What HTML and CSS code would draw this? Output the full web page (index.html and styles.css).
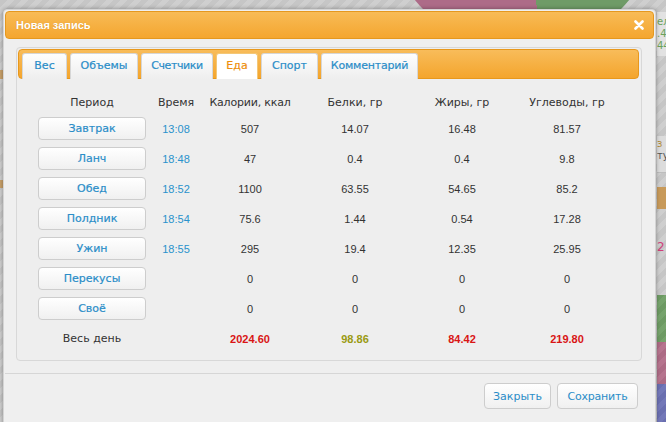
FILE: index.html
```html
<!DOCTYPE html>
<html lang="ru">
<head>
<meta charset="utf-8">
<title>Новая запись</title>
<link rel="stylesheet" href="styles.css">
</head>
<body>
<div class="backdrop">
  <div class="pie"></div>
  <div class="side side-top">ел<br>.4<br>44</div>
  <div class="side side-mid"><span class="o">з</span><br>ту</div>
  <div class="side-block block-orange"></div>
  <div class="side side-num">2</div>
  <div class="side-block block-green"></div>
  <div class="side-block block-pink"></div>
  <div class="side-block block-blue"></div>
  <div class="left-bit bit-1"></div>
  <div class="left-bit bit-2"></div>
</div>

<div class="dialog">
  <div class="titlebar">
    <span class="title">Новая запись</span>
    <svg class="close" width="10" height="10" viewBox="0 0 10 10" aria-label="Закрыть">
      <path d="M1.5 1.5 L8.5 8.5 M8.5 1.5 L1.5 8.5" stroke="#fff" stroke-width="2.6" stroke-linecap="round" fill="none"/>
    </svg>
  </div>

  <div class="panel">
    <div class="tabs">
      <div class="tab tab-ves">Вес</div>
      <div class="tab tab-obemy">Объемы</div>
      <div class="tab tab-schet">Счетчики</div>
      <div class="tab tab-eda active">Еда</div>
      <div class="tab tab-sport">Спорт</div>
      <div class="tab tab-komm">Комментарий</div>
    </div>

    <div class="table">
      <div class="row head">
        <div>Период</div><div>Время</div><div>Калории, ккал</div><div>Белки, гр</div><div>Жиры, гр</div><div>Углеводы, гр</div>
      </div>
      <div class="row">
        <div><button class="meal">Завтрак</button></div><div class="num time">13:08</div><div class="num">507</div><div class="num">14.07</div><div class="num">16.48</div><div class="num">81.57</div>
      </div>
      <div class="row">
        <div><button class="meal">Ланч</button></div><div class="num time">18:48</div><div class="num">47</div><div class="num">0.4</div><div class="num">0.4</div><div class="num">9.8</div>
      </div>
      <div class="row">
        <div><button class="meal">Обед</button></div><div class="num time">18:52</div><div class="num">1100</div><div class="num">63.55</div><div class="num">54.65</div><div class="num">85.2</div>
      </div>
      <div class="row">
        <div><button class="meal">Полдник</button></div><div class="num time">18:54</div><div class="num">75.6</div><div class="num">1.44</div><div class="num">0.54</div><div class="num">17.28</div>
      </div>
      <div class="row">
        <div><button class="meal">Ужин</button></div><div class="num time">18:55</div><div class="num">295</div><div class="num">19.4</div><div class="num">12.35</div><div class="num">25.95</div>
      </div>
      <div class="row">
        <div><button class="meal">Перекусы</button></div><div></div><div class="num">0</div><div class="num">0</div><div class="num">0</div><div class="num">0</div>
      </div>
      <div class="row">
        <div><button class="meal">Своё</button></div><div></div><div class="num">0</div><div class="num">0</div><div class="num">0</div><div class="num">0</div>
      </div>
      <div class="row total">
        <div>Весь день</div><div></div><div class="num red">2024.60</div><div class="num olive">98.86</div><div class="num red">84.42</div><div class="num red">219.80</div>
      </div>
    </div>
  </div>

  <div class="footer">
    <button class="btn btn-close">Закрыть</button>
    <button class="btn btn-save">Сохранить</button>
  </div>
</div>
</body>
</html>
```

FILE: styles.css
```css
html, body {
  margin: 0;
  padding: 0;
}

body {
  width: 666px;
  height: 422px;
  overflow: hidden;
  position: relative;
  font-family: "DejaVu Sans", sans-serif;
  font-size: 11px;
  color: #333;
  background: repeating-linear-gradient(135deg, #c6c6c6 0 5px, #cfcfcf 5px 10px);
}

/* ---------- page behind the modal ---------- */
.backdrop {
  position: absolute;
  inset: 0;
  z-index: 0;
}

.pie {
  position: absolute;
  left: 384px;
  top: -225px;
  width: 276px;
  height: 276px;
  border-radius: 50%;
  background: conic-gradient(#6f9b67 0 171deg, #ad6b88 171deg 360deg);
}

.side {
  position: absolute;
  left: 657px;
  width: 9px;
  overflow: hidden;
  font-family: "DejaVu Sans", sans-serif;
  font-size: 10px;
  line-height: 12px;
  white-space: nowrap;
}

.side-top {
  top: 12px;
  height: 40px;
  padding-top: 4px;
  background: #e2e2e2;
  color: #6aa35a;
}

.side-mid {
  top: 136px;
  height: 34px;
  padding-top: 2px;
  background: #dcdcdc;
  color: #555;
  border-bottom: 1px solid #bdbdbd;
}

.side-mid .o { color: #b08a3a; }

.side-num {
  top: 241px;
  height: 14px;
  color: #d0407a;
  font-size: 12px;
}

.side-block {
  position: absolute;
  left: 657px;
  width: 12px;
}

.block-orange { top: 187px; height: 22px; background: #c89a5a; }
.block-green  { top: 295px; height: 47px; background: repeating-linear-gradient(135deg, #6d9a63 0 5px, #76a36c 5px 10px); }
.block-pink   { top: 342px; height: 42px; background: repeating-linear-gradient(135deg, #ad6b85 0 5px, #b6748e 5px 10px); }
.block-blue   { top: 384px; height: 40px; background: repeating-linear-gradient(135deg, #6a6fb0 0 5px, #7378b8 5px 10px); }

.left-bit {
  position: absolute;
  left: 0;
  width: 3px;
  background: #c8a06a;
}
.bit-1 { top: 70px; height: 9px; }
.bit-2 { top: 180px; height: 8px; }

/* ---------- dialog ---------- */
.dialog {
  position: relative;
  z-index: 1;
  box-sizing: border-box;
  width: 653px;
  height: 420px;
  margin: 9px 0 0 3px;
  padding: 1px;
  background: #efefef;
  border: 1px solid #d4d4d4;
  border-radius: 4px;
  box-shadow: 0 0 4px rgba(0, 0, 0, 0.35);
}

.titlebar {
  box-sizing: border-box;
  height: 28px;
  display: flex;
  align-items: center;
  justify-content: space-between;
  padding: 0 9px 0 10px;
  border: 1px solid #e5981f;
  border-radius: 4px;
  background: linear-gradient(#f8bb56, #f4a630);
}

.title {
  font-family: "Liberation Sans", Arial, sans-serif;
  font-weight: bold;
  font-size: 11px;
  color: #fff;
  text-shadow: 0 0 1px rgba(170, 100, 0, 0.4);
}

.close {
  display: block;
}

/* ---------- content panel ---------- */
.panel {
  box-sizing: border-box;
  height: 314px;
  margin: 8px 12px 0 11px;
  padding: 1px 2px 10px 1px;
  background: #eeeeee;
  border: 1px solid #d8d8d8;
  border-radius: 4px;
}

.tabs {
  box-sizing: border-box;
  height: 30px;
  display: flex;
  align-items: flex-end;
  gap: 3px;
  padding: 3px 0 0 3px;
  border: 1px solid #e8981c;
  border-radius: 4px;
  background: linear-gradient(#f8bc5a, #f4a52d);
}

.tab {
  box-sizing: border-box;
  height: 26px;
  margin-bottom: -1px;
  padding-top: 4px;
  text-align: center;
  white-space: nowrap;
  border: 1px solid #d6d6d6;
  border-bottom: none;
  border-radius: 3px 3px 0 0;
  background: linear-gradient(#fefefe, #eeeeee);
  color: #2a8dc8;
  line-height: 16px;
  -webkit-text-stroke: 0.2px currentColor;
}

.tab-ves   { width: 45px; }
.tab-obemy { width: 68px; }
.tab-schet { width: 72px; letter-spacing: -0.4px; }
.tab-eda   { width: 42px; }
.tab-sport { width: 57px; }
.tab-komm  { width: 97px; letter-spacing: -0.2px; }

.tab.active {
  background: #ffffff;
  border-color: #f3c777;
  color: #ee8e0a;
}

/* ---------- table ---------- */
.table {
  display: flex;
  flex-direction: column;
  gap: 7px;
  margin: 16px 0 0 12px;
}

.row {
  display: grid;
  grid-template-columns: 124px 44px 104px 106px 108px 102px;
  height: 23px;
  align-items: center;
  text-align: center;
}

.row.head {
  height: 15px;
  line-height: 15px;
}

.row.head div:nth-child(3) {
  letter-spacing: -0.2px;
}

.num {
  font-family: "Liberation Sans", Arial, sans-serif;
  font-size: 11px;
  color: #333;
}

.num.time {
  color: #2a92cc;
}

.meal {
  box-sizing: border-box;
  width: 108px;
  height: 23px;
  margin: 0 auto;
  display: block;
  padding: 0;
  font-family: "DejaVu Sans", sans-serif;
  font-size: 11px;
  color: #2a8dc8;
  -webkit-text-stroke: 0.2px currentColor;
  background: linear-gradient(#ffffff, #f0f0f0);
  border: 1px solid #cdcdcd;
  border-radius: 4px;
}

.total .num {
  font-weight: bold;
}

.num.red { color: #d91515; }
.num.olive { color: #9a9a12; }

/* ---------- footer ---------- */
.footer {
  margin-top: 12px;
  border-top: 1px solid #d6d6d6;
  display: flex;
  justify-content: flex-end;
  gap: 6px;
  padding: 9px 16px 0 0;
}

.btn {
  box-sizing: border-box;
  height: 26px;
  padding: 0;
  font-family: "DejaVu Sans", sans-serif;
  font-size: 11px;
  color: #2a8dc8;
  background: linear-gradient(#ffffff, #f0f0f0);
  border: 1px solid #cdcdcd;
  border-radius: 4px;
}

.btn-close { width: 67px; }
.btn-save  { width: 81px; letter-spacing: -0.2px; }
```
